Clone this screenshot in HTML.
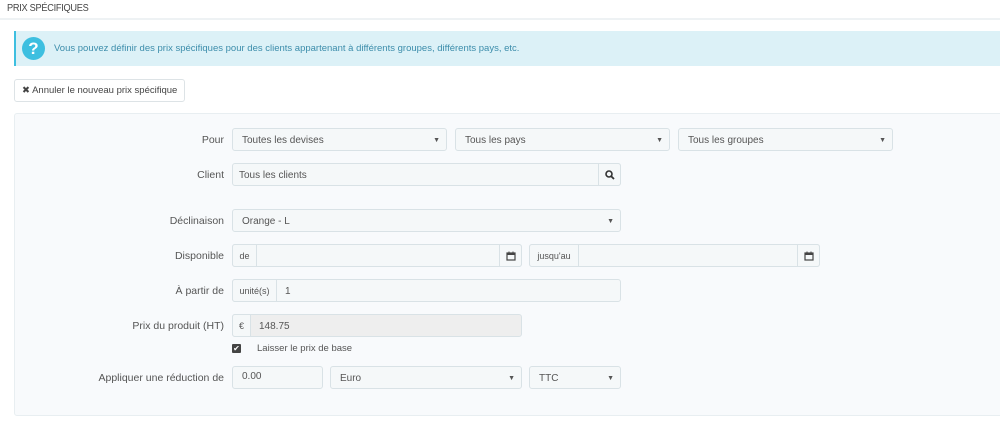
<!DOCTYPE html>
<html><head><meta charset="utf-8"><style>
*{box-sizing:border-box;margin:0;padding:0}
body{width:1000px;height:423px;background:#fff;font-family:"Liberation Sans",sans-serif;font-size:10px;color:#555;position:relative;overflow:hidden}
.a{position:absolute}
.f{position:absolute;height:23px;border:1px solid #d9e2e6;border-radius:3px;background:#f5f8f9;line-height:23px;padding-left:9px;color:#555}
.ad{position:absolute;top:-1px;height:23px;border:1px solid #d9e2e6;background:#f5f8f9;line-height:23px;text-align:center;font-size:9px}
.car{position:absolute;right:6px;top:0;font-size:7px;color:#555}
.lb{position:absolute;right:776px;text-align:right;line-height:25px;color:#555;font-size:10.5px}
</style></head><body>
<div class="a" style="left:7px;top:3px;font-size:10px;color:#444;letter-spacing:-0.3px;transform:scaleX(0.92);transform-origin:left">PRIX SPÉCIFIQUES</div>
<div class="a" style="left:0;top:18px;width:1000px;height:2px;background:#eef2f4"></div>
<div class="a" style="left:14px;top:31px;width:986px;height:35px;background:#dcf1f7;border-left:2px solid #3dbfe0"></div>
<div class="a" style="left:22px;top:37px;width:23px;height:23px;border-radius:50%;background:#3dbfe0;color:#fff;font-weight:bold;font-size:17px;text-align:center;line-height:23px">?</div>
<div class="a" style="left:54px;top:43px;color:#3c8dab;font-size:9.5px">Vous pouvez définir des prix spécifiques pour des clients appartenant à différents groupes, différents pays, etc.</div>
<div class="a" style="left:14px;top:79px;width:171px;height:23px;border:1px solid #dde3e6;border-radius:3px;background:#fff;line-height:21px;padding-left:7px;color:#444;font-size:9.5px">✖ Annuler le nouveau prix spécifique</div>
<div class="a" style="left:14px;top:113px;width:990px;height:303px;background:#f8fafc;border:1px solid #e8eef1;border-radius:3px"></div>

<div class="lb" style="top:128px">Pour</div>
<div class="f" style="left:232px;top:128px;width:215px">Toutes les devises<span class="car">▼</span></div>
<div class="f" style="left:455px;top:128px;width:215px">Tous les pays<span class="car">▼</span></div>
<div class="f" style="left:678px;top:128px;width:215px">Tous les groupes<span class="car">▼</span></div>

<div class="lb" style="top:163px">Client</div>
<div class="f" style="left:232px;top:163px;width:389px;padding-left:6px">Tous les clients<div class="ad" style="right:-1px;width:23px;border-radius:0 3px 3px 0"><svg width="10" height="10" viewBox="0 0 10 10" style="margin-top:6px"><circle cx="4" cy="4" r="3" fill="none" stroke="#333" stroke-width="1.6"/><line x1="6.2" y1="6.2" x2="9" y2="9" stroke="#333" stroke-width="1.8"/></svg></div></div>

<div class="lb" style="top:209px">Déclinaison</div>
<div class="f" style="left:232px;top:209px;width:389px">Orange - L<span class="car">▼</span></div>

<div class="lb" style="top:244px">Disponible</div>
<div class="f" style="left:232px;top:244px;width:290px"><div class="ad" style="left:-1px;width:25px;border-radius:3px 0 0 3px">de</div><div class="ad" style="right:-1px;width:23px;border-radius:0 3px 3px 0"><svg width="10" height="10" viewBox="0 0 10 10" style="margin-top:6px"><rect x="1" y="2" width="8" height="7" fill="none" stroke="#444" stroke-width="1.2"/><rect x="1" y="2" width="8" height="2" fill="#444"/><rect x="2.5" y="0.5" width="1" height="2" fill="#444"/><rect x="6.5" y="0.5" width="1" height="2" fill="#444"/></svg></div></div>
<div class="f" style="left:529px;top:244px;width:291px"><div class="ad" style="left:-1px;width:50px;border-radius:3px 0 0 3px">jusqu'au</div><div class="ad" style="right:-1px;width:23px;border-radius:0 3px 3px 0"><svg width="10" height="10" viewBox="0 0 10 10" style="margin-top:6px"><rect x="1" y="2" width="8" height="7" fill="none" stroke="#444" stroke-width="1.2"/><rect x="1" y="2" width="8" height="2" fill="#444"/><rect x="2.5" y="0.5" width="1" height="2" fill="#444"/><rect x="6.5" y="0.5" width="1" height="2" fill="#444"/></svg></div></div>

<div class="lb" style="top:279px">À partir de</div>
<div class="f" style="left:232px;top:279px;width:389px;padding-left:52px"><div class="ad" style="left:-1px;width:45px;border-radius:3px 0 0 3px">unité(s)</div>1</div>

<div class="lb" style="top:314px">Prix du produit (HT)</div>
<div class="f" style="left:232px;top:314px;width:290px;background:#eeeeee;padding-left:26px"><div class="ad" style="left:-1px;width:19px;border-radius:3px 0 0 3px">€</div>148.75</div>

<div class="a" style="left:232px;top:344px;width:9px;height:9px;background:#444;border-radius:1px;color:#fff;font-size:8px;line-height:9px;text-align:center">✔</div>
<div class="a" style="left:257px;top:343px;font-size:9.5px">Laisser le prix de base</div>

<div class="lb" style="top:366px">Appliquer une réduction de</div>
<div class="f" style="left:232px;top:366px;width:91px;line-height:19px">0.00</div>
<div class="f" style="left:330px;top:366px;width:192px">Euro<span class="car">▼</span></div>
<div class="f" style="left:529px;top:366px;width:92px">TTC<span class="car">▼</span></div>
</body></html>
